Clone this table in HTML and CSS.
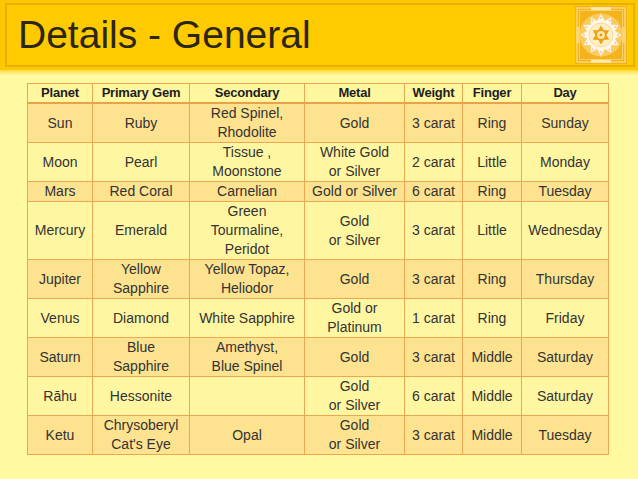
FILE: index.html
```html
<!DOCTYPE html>
<html>
<head>
<meta charset="utf-8">
<link rel="stylesheet" href="styles.css">
</head>
<body>
<div class="top">
  <div class="bar">
    <h1 class="title">Details - General</h1>
    <svg class="yantra" viewBox="0 0 52 58" width="52" height="58">
      <rect x="0" y="0" width="52" height="58" fill="#f4b31c"/>
      <rect x="2" y="2" width="48" height="54" fill="none" stroke="#fde7a0" stroke-width="1"/>
      <rect x="4.5" y="4.5" width="43" height="49" fill="none" stroke="#fbd877" stroke-width="0.8"/>
      <rect x="16" y="1.2" width="20" height="3" fill="#fdeaa8"/>
      <rect x="16" y="53.8" width="20" height="3" fill="#fdeaa8"/>
      <rect x="1.2" y="21" width="3" height="16" fill="#fbd877"/>
      <rect x="47.8" y="21" width="3" height="16" fill="#fbd877"/>
      <circle cx="26" cy="29" r="21.5" fill="#f8cd5e"/>
      <polygon fill="#fff6e4" stroke="#f4c65c" stroke-width="0.6" points="26,7 29.9,14.5 36.5,10.8 36.6,18.4 44.2,18.5 40.5,25.1 47,29 40.5,32.9 44.2,39.5 36.6,39.6 36.5,47.2 29.9,43.5 26,51 22.1,43.5 15.5,47.2 15.4,39.6 7.8,39.5 11.5,32.9 5,29 11.5,25.1 7.8,18.5 15.4,18.4 15.5,10.8 22.1,14.5"/>
      <g fill="#f0b8c0">
        <circle cx="26" cy="12" r="0.9"/><circle cx="34.5" cy="14.5" r="0.9"/><circle cx="40.5" cy="21" r="0.9"/>
        <circle cx="43" cy="29" r="0.9"/><circle cx="40.5" cy="37" r="0.9"/><circle cx="34.5" cy="43.5" r="0.9"/>
        <circle cx="26" cy="46" r="0.9"/><circle cx="17.5" cy="43.5" r="0.9"/><circle cx="11.5" cy="37" r="0.9"/>
        <circle cx="9" cy="29" r="0.9"/><circle cx="11.5" cy="21" r="0.9"/><circle cx="17.5" cy="14.5" r="0.9"/>
      </g>
      <circle cx="26" cy="29" r="12" fill="#fdeec4" stroke="#f3c764" stroke-width="0.5"/>
      <polygon fill="#ef9f12" points="26,19.5 34.2,33.7 17.8,33.7"/>
      <polygon fill="#ef9f12" points="26,38.5 34.2,24.3 17.8,24.3"/>
      <circle cx="26" cy="29" r="4" fill="#fde4a6"/>
      <circle cx="26" cy="29" r="1.3" fill="#e8930a"/>
    </svg>
  </div>
</div>
<div class="fade"></div>
<table class="gems">
  <colgroup>
    <col class="c1"><col class="c2"><col class="c3"><col class="c4"><col class="c5"><col class="c6"><col class="c7">
  </colgroup>
  <thead>
    <tr><th>Planet</th><th>Primary Gem</th><th>Secondary</th><th>Metal</th><th>Weight</th><th>Finger</th><th>Day</th></tr>
  </thead>
  <tbody>
    <tr class="dark"><td>Sun</td><td>Ruby</td><td>Red Spinel,<br>Rhodolite</td><td>Gold</td><td>3 carat</td><td>Ring</td><td>Sunday</td></tr>
    <tr class="light"><td>Moon</td><td>Pearl</td><td>Tissue ,<br>Moonstone</td><td>White Gold<br>or Silver</td><td>2 carat</td><td>Little</td><td>Monday</td></tr>
    <tr class="dark"><td>Mars</td><td>Red Coral</td><td>Carnelian</td><td>Gold or Silver</td><td>6 carat</td><td>Ring</td><td>Tuesday</td></tr>
    <tr class="light"><td>Mercury</td><td>Emerald</td><td>Green<br>Tourmaline,<br>Peridot</td><td>Gold<br>or Silver</td><td>3 carat</td><td>Little</td><td>Wednesday</td></tr>
    <tr class="dark"><td>Jupiter</td><td>Yellow<br>Sapphire</td><td>Yellow Topaz,<br>Heliodor</td><td>Gold</td><td>3 carat</td><td>Ring</td><td>Thursday</td></tr>
    <tr class="light"><td>Venus</td><td>Diamond</td><td>White Sapphire</td><td>Gold or<br>Platinum</td><td>1 carat</td><td>Ring</td><td>Friday</td></tr>
    <tr class="dark"><td>Saturn</td><td>Blue<br>Sapphire</td><td>Amethyst,<br>Blue Spinel</td><td>Gold</td><td>3 carat</td><td>Middle</td><td>Saturday</td></tr>
    <tr class="light"><td>Rāhu</td><td>Hessonite</td><td></td><td>Gold<br>or Silver</td><td>6 carat</td><td>Middle</td><td>Saturday</td></tr>
    <tr class="dark"><td>Ketu</td><td>Chrysoberyl<br>Cat's Eye</td><td>Opal</td><td>Gold<br>or Silver</td><td>3 carat</td><td>Middle</td><td>Tuesday</td></tr>
  </tbody>
</table>
</body>
</html>
```

FILE: styles.css
```css
html, body {
  margin: 0;
  padding: 0;
}
body {
  background: #fff9a2;
  font-family: "Liberation Sans", Arial, sans-serif;
  color: #333;
  width: 638px;
  height: 479px;
  overflow: hidden;
}
.top {
  background: #fdc801;
  padding: 3px 3px 3px 5px;
}
.bar {
  height: 60px;
  border: 2px solid #e7b100;
  background: #ffcb00;
  display: flex;
  align-items: center;
  justify-content: space-between;
  padding: 0 6px 0 11px;
}
.title {
  margin: 0;
  font-weight: normal;
  font-size: 39px;
  line-height: 60px;
  color: #2b2714;
}
.yantra {
  display: block;
}
.fade {
  height: 5px;
  background: linear-gradient(#fcd840, #fff9a2);
}
.gems {
  margin: 8px 0 0 27px;
  border-collapse: collapse;
  table-layout: fixed;
  width: 581px;
}
.c1 { width: 65px; }
.c2 { width: 97px; }
.c3 { width: 115px; }
.c4 { width: 100px; }
.c5 { width: 58px; }
.c6 { width: 59px; }
.c7 { width: 87px; }
.gems th, .gems td {
  border: 1px solid #eba851;
  padding: 0;
  text-align: center;
  vertical-align: middle;
}
.gems th {
  font-size: 13px;
  font-weight: bold;
  line-height: 18px;
  color: #1e1e1e;
  letter-spacing: -0.2px;
  background: #fff7a0;
  border-bottom: 2px solid #eba04a;
}
.gems td {
  font-size: 14px;
  line-height: 19px;
  height: 19px;
}
.dark td {
  background: #fde28f;
}
.light td {
  background: #fff6a2;
}
```
